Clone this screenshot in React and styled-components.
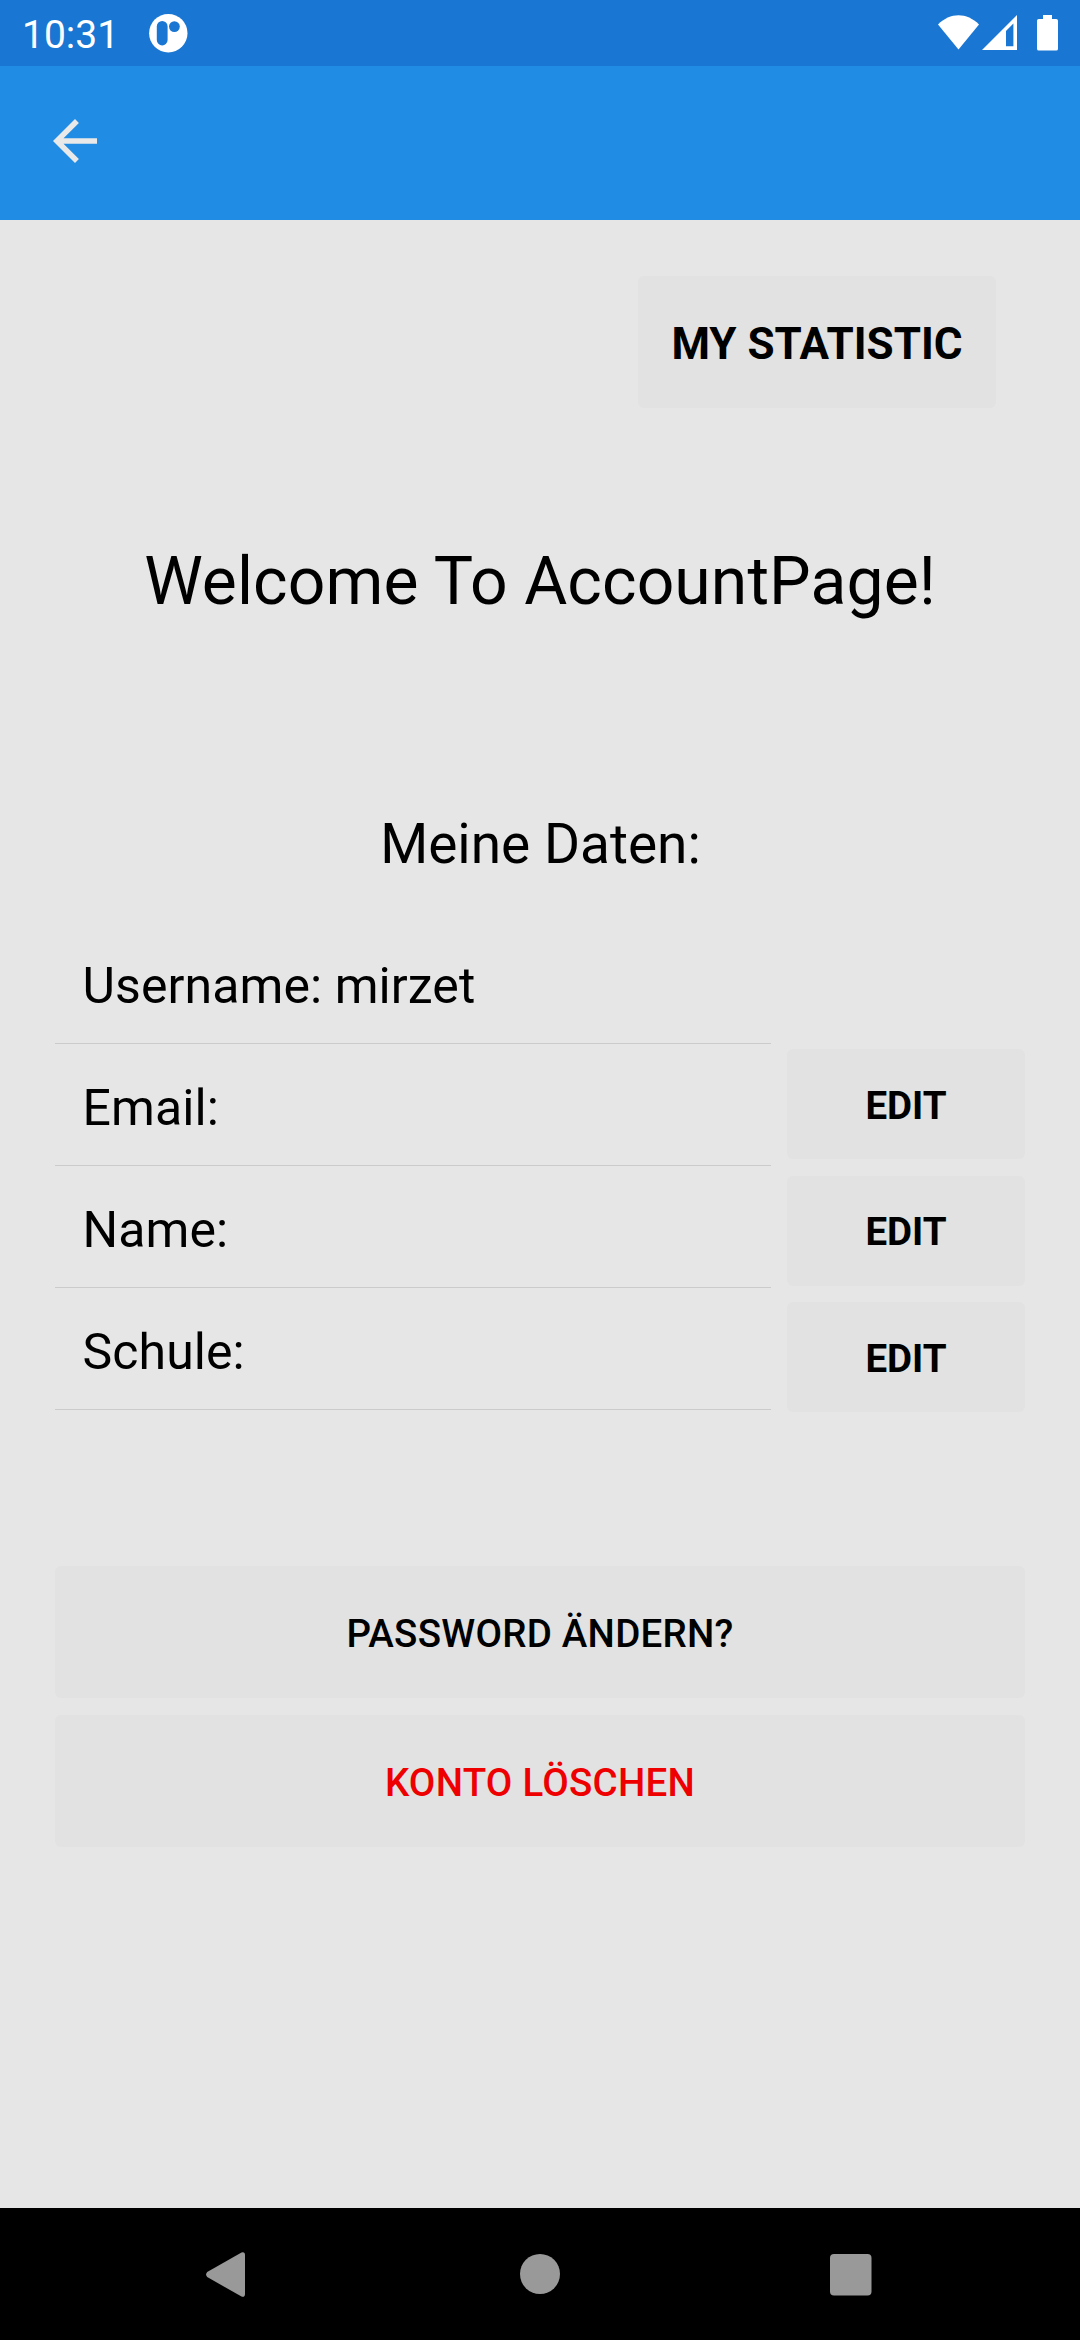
import React from "react";
import styled, { createGlobalStyle } from "styled-components";

const GlobalStyle = createGlobalStyle`
  * { box-sizing: border-box; }
  body { margin: 0; background: #e6e6e6; }
`;

const Screen = styled.div`
  width: 1080px;
  height: 2340px;
  display: flex;
  flex-direction: column;
  overflow: hidden;
  background: #e6e6e6;
  color: #000;
  font-family: Roboto, "Liberation Sans", sans-serif;
`;

const StatusBar = styled.header`
  height: 66px;
  flex: none;
  display: flex;
  justify-content: space-between;
  background: #1976d2;
  color: #fff;
`;

const StatusGroup = styled.div`
  display: flex;
  align-items: flex-start;
`;

const Clock = styled.span`
  width: 127px;
  padding: 2px 0 0 22px;
  font-size: 39px;
  line-height: 66px;
`;

const Glyph = styled.svg`
  display: block;
  flex: none;
`;

const AppBar = styled.nav`
  height: 154px;
  flex: none;
  padding: 42.25px 0 0 42px;
  background: #208ce3;
`;

const BackButton = styled.button`
  display: block;
  padding: 0;
  border: 0;
  background: none;
`;

const Content = styled.main`
  flex: 1;
  display: flex;
  flex-direction: column;
  padding: 56px 55px 0;
`;

const Button = styled.button`
  display: flex;
  align-items: center;
  justify-content: center;
  width: ${(p) => p.$width || "100%"};
  height: ${(p) => p.$height || 132}px;
  padding: ${(p) => p.$nudge || 3}px 0 0;
  border: 0;
  border-radius: 6px;
  background: #e2e2e2;
  color: ${(p) => p.$color || "#000"};
  font-family: inherit;
  font-size: ${(p) => p.$size || 38.5}px;
  font-weight: ${(p) => p.$weight || 500};
  letter-spacing: ${(p) => p.$tracking || 0}px;
  text-transform: uppercase;
  white-space: nowrap;
`;

const StatisticRow = styled.div`
  display: flex;
  justify-content: flex-end;
  padding-right: 29px;
`;

const Title = styled.h1`
  margin: 134px 0 0;
  font-size: 66px;
  font-weight: 400;
  line-height: 80px;
  letter-spacing: 0.1px;
  text-align: center;
`;

const Subtitle = styled.h2`
  margin: 186px 0 0;
  padding-left: 1px;
  font-size: 55px;
  font-weight: 400;
  line-height: 72px;
  text-align: center;
`;

const DataSection = styled.section`
  display: flex;
  justify-content: space-between;
  margin-top: 42px;
`;

const DataList = styled.ul`
  width: 716px;
  margin: 0;
  padding: 0;
  list-style: none;
`;

const DataItem = styled.li`
  height: 122px;
  padding: 4px 0 0 27.5px;
  border-bottom: 1px solid #cbcbcb;
  font-size: 50px;
  line-height: 121px;
  letter-spacing: 0.08px;
`;

const EditColumn = styled.div`
  display: flex;
  flex-direction: column;
  gap: 16.5px;
  width: 238px;
  padding-top: 127px;
`;

const Actions = styled.section`
  display: flex;
  flex-direction: column;
  gap: 17px;
  margin-top: 154px;
`;

const NavBar = styled.footer`
  height: 132px;
  flex: none;
  display: flex;
  justify-content: space-between;
  align-items: center;
  padding: 0 196px;
  background: #000;
`;

function NotificationIcon() {
  return (
    <Glyph width="60" height="66" viewBox="127 0 60 66" overflow="visible">
      <circle cx="168.3" cy="33.2" r="19.2" fill="#fff" />
      <rect x="156.8" y="21" width="10.8" height="24.4" rx="5.4" fill="#1976d2" />
      <circle cx="174.4" cy="26.6" r="5.4" fill="#1976d2" />
    </Glyph>
  );
}

function SystemIcons() {
  return (
    <Glyph width="180" height="66" viewBox="900 0 180 66" fill="#fff">
      <path d="M938 24.6 C950 12.2 967 12.2 979 24.6 L958.5 49.6Z" />
      <path
        fillRule="evenodd"
        d="M1017 15 V50 H982Z M1006 31 V46.3 H1013.4 V23.6Z"
      />
      <path d="M1043 15 H1052 V19 H1056.2 Q1058 19 1058 20.8 V48.7 Q1058 50.6 1056.2 50.6 H1038.8 Q1037 50.6 1037 48.7 V20.8 Q1037 19 1038.8 19 H1043Z" />
    </Glyph>
  );
}

function BackArrow() {
  return (
    <Glyph width="66" height="66" viewBox="0 0 24 24" fill="#e9e9e9">
      <path d="M20 11H7.83l5.59-5.59L12 4l-8 8 8 8 1.41-1.41L7.83 13H20v-2z" />
    </Glyph>
  );
}

const fields = ["Username: mirzet", "Email:", "Name:", "Schule:"];
const editable = ["email", "name", "schule"];

export default function App() {
  return (
    <Screen>
      <GlobalStyle />
      <StatusBar>
        <StatusGroup>
          <Clock>10:31</Clock>
          <NotificationIcon />
        </StatusGroup>
        <SystemIcons />
      </StatusBar>
      <AppBar>
        <BackButton aria-label="Zurück">
          <BackArrow />
        </BackButton>
      </AppBar>
      <Content>
        <StatisticRow>
          <Button $width="358px" $size={44} $weight={700} $nudge={4}>
            My Statistic
          </Button>
        </StatisticRow>
        <Title>Welcome To AccountPage!</Title>
        <Subtitle>Meine Daten:</Subtitle>
        <DataSection>
          <DataList>
            {fields.map((f) => (
              <DataItem key={f}>{f}</DataItem>
            ))}
          </DataList>
          <EditColumn>
            {editable.map((f) => (
              <Button key={f} $height={110} $weight={700} $nudge={2}>
                Edit
              </Button>
            ))}
          </EditColumn>
        </DataSection>
        <Actions>
          <Button $tracking={0.25}>Password ändern?</Button>
          <Button $tracking={0.25} $color="#ee0000">
            Konto löschen
          </Button>
        </Actions>
      </Content>
      <NavBar>
        <Glyph width="60" height="60" viewBox="196 2244 60 60" fill="#999">
          <path d="M207.2 2272 L241.5 2252.4 Q245 2251.4 245 2255 V2294 Q245 2297.600 241.5 2296.600 L207.2 2277 Q205 2274.500 207.2 2272Z" />
        </Glyph>
        <Glyph width="60" height="60" viewBox="510 2244 60 60" fill="#999">
          <circle cx="540" cy="2274" r="20" />
        </Glyph>
        <Glyph width="60" height="60" viewBox="824 2244 60 60" fill="#999">
          <rect x="830" y="2254" width="41.500" height="41.500" rx="4" />
        </Glyph>
      </NavBar>
    </Screen>
  );
}
